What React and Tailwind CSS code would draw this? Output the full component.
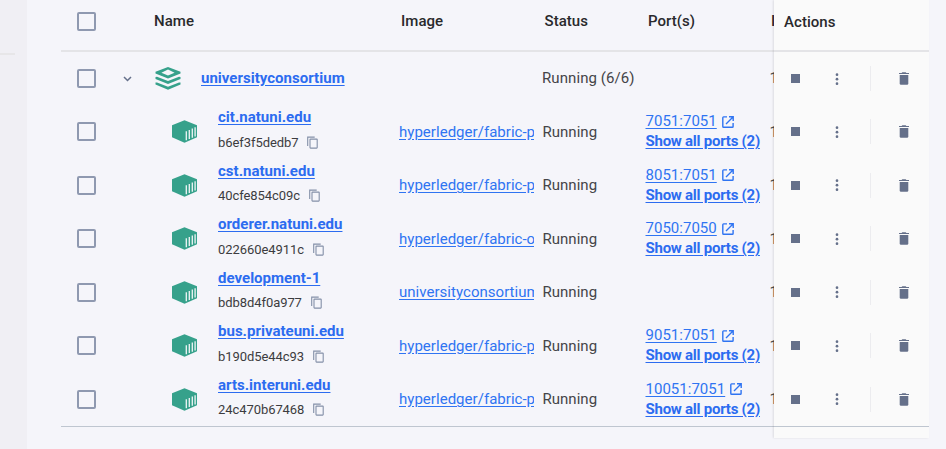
import React from "react";

const containers = [
  { name: "cit.natuni.edu", id: "b6ef3f5dedb7", image: "hyperledger/fabric-p", port: "7051:7051" },
  { name: "cst.natuni.edu", id: "40cfe854c09c", image: "hyperledger/fabric-p", port: "8051:7051" },
  { name: "orderer.natuni.edu", id: "022660e4911c", image: "hyperledger/fabric-o", port: "7050:7050" },
  { name: "development-1", id: "bdb8d4f0a977", image: "universityconsortium", port: null },
  { name: "bus.privateuni.edu", id: "b190d5e44c93", image: "hyperledger/fabric-p", port: "9051:7051" },
  { name: "arts.interuni.edu", id: "24c470b67468", image: "hyperledger/fabric-p", port: "10051:7051" },
];

function Checkbox() {
  return <span className="ml-4 block h-[19px] w-[19px] shrink-0 rounded-[2px] border-2 border-[#8f99b0]" />;
}

function StackIcon() {
  return (
    <svg className="block h-[23px] w-[26px]" viewBox="0 0 26 23" fill="#36a18b">
      <path fillRule="evenodd" d="M13 0 L25.5 4.8 V6.6 L13 11.6 L0.5 6.6 V4.8 Z M13 2.6 L6.4 5.7 L13 8.6 L19.6 5.7 Z" />
      <path d="M0.5 9.9 L2 9.7 L13 14 L24 9.7 L25.5 9.9 V11.9 L13 17.1 L0.5 11.9 Z" />
      <path d="M0.5 15.6 L2 15.4 L13 19.7 L24 15.4 L25.5 15.6 V17.6 L13 22.8 L0.5 17.6 Z" />
    </svg>
  );
}

function ContainerIcon() {
  return (
    <svg className="block h-[23px] w-[25px]" viewBox="0 0 25 23">
      <path d="M12.5 0.3 L25 5.2 V17.2 L12.5 22.7 L0 17.2 V5.2 Z" fill="#36a18b" />
      <path d="M14.3 11.2V20.2M17.3 9.9V19M20.3 8.6V17.7M23.1 7.3V16.4" stroke="#f0f5f6" strokeWidth="1.3" />
    </svg>
  );
}

function CopyIcon() {
  return (
    <svg className="block h-[13px] w-[11px]" viewBox="0 0 11 13" fill="none" stroke="#8490a8" strokeWidth="1.1">
      <path d="M0.7 10V1.1H7.7" />
      <rect x="3" y="3.1" width="7.2" height="9" rx="0.5" />
    </svg>
  );
}

function OpenIcon() {
  return (
    <svg className="block h-3 w-3" viewBox="0 0 12 12" fill="none" stroke="#2f74f2" strokeWidth="1.4">
      <path d="M5 0.9H1.6Q0.8 0.9 0.8 1.7V10.4Q0.8 11.2 1.6 11.2H10.3Q11.1 11.2 11.1 10.4V7" />
      <path d="M7 0.8H11.2V5M11 1L4 8" />
    </svg>
  );
}

function Actions() {
  return (
    <div className="flex h-full items-center">
      <span className="ml-[17px] h-[9px] w-[9px] bg-[#65708a]" />
      <svg className="ml-[35px] h-[12px] w-[4px]" viewBox="0 0 4 12" fill="#65708a">
        <circle cx="2" cy="1.7" r="1.35" />
        <circle cx="2" cy="6.2" r="1.35" />
        <circle cx="2" cy="10.7" r="1.35" />
      </svg>
      <span className="ml-[31px] h-[25px] w-px bg-[#ececef]" />
      <svg className="ml-[28px] h-[13px] w-[10px]" viewBox="0 0 10 13" fill="#65708a">
        <path d="M0 0.9H2.6L3.3 0.2H6.7L7.4 0.9H10V2.1H0Z" />
        <path d="M0.7 3.1H9.3V11.5Q9.3 12.8 8 12.8H2Q0.7 12.8 0.7 11.5Z" />
      </svg>
    </div>
  );
}

function Clipped({ children }) {
  return <span className="ml-[8.5px] shrink-0 text-[15px] text-[#4c4c50]">{children}</span>;
}

function ContainerRow({ item }) {
  return (
    <div className="flex h-[53.5px] w-[900px] items-center">
      <Checkbox />
      <div className="ml-[76px] w-[46px] shrink-0">
        <ContainerIcon />
      </div>
      <div className="w-[181px] shrink-0">
        <div className="h-[21px] text-[15px] leading-[20px] font-bold tracking-[0.02px] text-[#2c6cf0] underline underline-offset-2">{item.name}</div>
        <div className="flex h-[28px] items-center text-[13px] tracking-[-0.07px] text-[#3c3c40]">
          {item.id}
          <span className="ml-[9px]">
            <CopyIcon />
          </span>
        </div>
      </div>
      <div className="w-[135px] shrink-0 overflow-hidden text-[15px] leading-5 tracking-[0.03px] whitespace-nowrap text-[#2f74f2] underline underline-offset-2">{item.image}</div>
      <div className="ml-[8.5px] w-[103px] shrink-0 text-[15px] tracking-[0.02px] text-[#444448]">Running</div>
      <div className="-mt-px w-[115.5px] shrink-0 text-[15px] leading-5 whitespace-nowrap">
        {item.port && (
          <>
            <div className="flex items-center tracking-[0.02px] text-[#2f74f2]">
              <span className="underline underline-offset-2">{item.port}</span>
              <span className="mt-px ml-[5px]">
                <OpenIcon />
              </span>
            </div>
            <div className="font-bold tracking-[-0.25px] text-[#2c6cf0] underline underline-offset-2">Show all ports (2)</div>
          </>
        )}
      </div>
      <Clipped>1</Clipped>
    </div>
  );
}

export default function App() {
  return (
    <div className="flex h-[449px] w-[946px] overflow-hidden bg-[#f5f5fa] font-['Roboto','Liberation_Sans',sans-serif]">
      <aside className="h-full w-[27px] shrink-0 bg-[#f0eff4] pt-[53px]">
        <div className="h-[1.5px] w-[15px] bg-[#e7e6e8]" />
      </aside>
      <main className="ml-[34px] flex">
        <section className="w-[713px] overflow-hidden">
          <div className="flex h-[52px] w-[900px] border-b-2 border-[#e4e4e7] text-[15px] leading-[20px] font-medium tracking-[0.05px] text-[#29292c]">
            <div className="mt-[12px] h-5">
              <Checkbox />
            </div>
            <div className="mt-[11px] ml-[58px] w-[247px]">Name</div>
            <div className="mt-[11px] w-[143.5px]">Image</div>
            <div className="mt-[11px] w-[103.5px]">Status</div>
            <div className="mt-[11px] w-[123px]">Port(s)</div>
            <div className="mt-[11px]">I</div>
          </div>
          <div className="flex h-[53px] w-[900px] items-center">
            <Checkbox />
            <svg className="ml-[27px] h-[6px] w-[9px] shrink-0" viewBox="0 0 9 6" fill="none" stroke="#65708a" strokeWidth="1.5">
              <path d="M1 1L4.5 4.5L8 1" />
            </svg>
            <div className="ml-[23px] w-[46px] shrink-0">
              <StackIcon />
            </div>
            <div className="-mt-px w-[341px] shrink-0 text-[15px] font-bold tracking-[0.02px] text-[#2c6cf0] underline underline-offset-2">universityconsortium</div>
            <div className="-mt-px w-[219px] shrink-0 text-[15px] tracking-[0.08px] text-[#444448]">Running (6/6)</div>
            <Clipped>1</Clipped>
          </div>
          {containers.map((item) => (
            <ContainerRow key={item.id} item={item} />
          ))}
          <div className="h-px bg-[#bfc6d0]" />
        </section>
        <section className="h-[437.5px] w-[155px] bg-[#fafafa] shadow-[-1px_0_2px_rgba(0,0,0,0.1)]">
          <div className="h-[52px] border-b-2 border-[#e4e4e7] pt-[12px] pl-[10px] text-[15px] leading-5 font-medium tracking-[0.05px] text-[#29292c]">Actions</div>
          <div className="h-[53px]">
            <Actions />
          </div>
          {containers.map((item) => (
            <div key={item.id} className="h-[53.5px]">
              <Actions />
            </div>
          ))}
          <div className="h-px bg-[#bfc6d0]" />
        </section>
      </main>
    </div>
  );
}
